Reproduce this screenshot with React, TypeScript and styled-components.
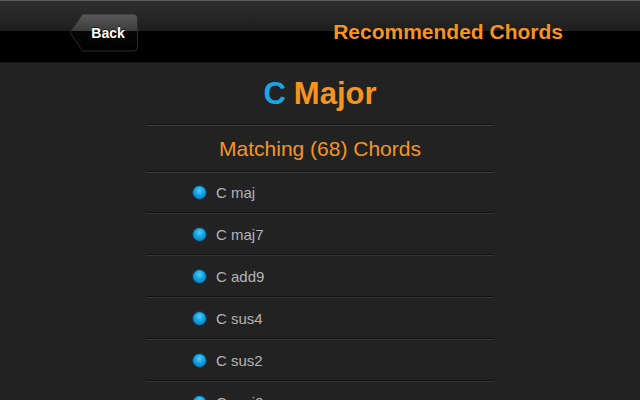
import React from "react";
import styled, { createGlobalStyle } from "styled-components";

const Global = createGlobalStyle`
  html, body { margin: 0; padding: 0; background: #222222; overflow: hidden; }
  body { font-family: "Liberation Sans", Arial, sans-serif; }
`;

const Screen = styled.div`
  width: 100%;
  height: 100vh;
  overflow: hidden;
  background: #222222;
  display: flex;
  flex-direction: column;
`;

const Header = styled.header`
  flex: 0 0 63px;
  height: 63px;
  box-sizing: border-box;
  display: flex;
  align-items: center;
  justify-content: space-between;
  padding: 1px 77px 0 69px;
  background: linear-gradient(
    to bottom,
    #5c5c5c 0px,
    #5c5c5c 1px,
    #2f2f2f 1px,
    #1e1e1e 31px,
    #000000 31px,
    #000000 62px,
    #151515 62px
  );
`;

const BackButton = styled.button`
  position: relative;
  width: 70px;
  height: 39px;
  margin-top: 1px;
  padding: 0 0 0 8px;
  border: none;
  background: transparent;
  color: #ffffff;
  font-family: "Liberation Sans", Arial, sans-serif;
  font-weight: bold;
  font-size: 14px;
  cursor: pointer;
  display: flex;
  align-items: center;
  justify-content: center;
  text-shadow: 0 -1px 0 rgba(0, 0, 0, 0.6);
`;

const ButtonShape = styled.svg`
  position: absolute;
  left: 0;
  top: 0;
  width: 70px;
  height: 39px;
  z-index: 0;
`;

const ButtonLabel = styled.span`
  position: relative;
  z-index: 1;
`;

const HeaderTitle = styled.h1`
  margin: 0;
  color: #f7941d;
  font-size: 21px;
  font-weight: bold;
  font-family: "Liberation Sans", Arial, sans-serif;
`;

const Column = styled.main`
  width: 348px;
  margin: 0 auto;
  display: flex;
  flex-direction: column;
`;

const KeyTitle = styled.h2`
  margin: 0;
  height: 61px;
  display: flex;
  align-items: center;
  justify-content: center;
  gap: 8px;
  font-size: 31px;
  font-weight: bold;
  color: #f7941d;
  border-bottom: 1px solid #151515;
  box-shadow: 0 1px 0 #3c3c3c;
`;

const KeyNote = styled.span`
  color: #1ba6ea;
`;

const SectionTitle = styled.h3`
  margin: 1px 0 0;
  height: 45px;
  display: flex;
  align-items: center;
  justify-content: center;
  font-size: 21px;
  font-weight: normal;
  color: #f7941d;
  border-bottom: 1px solid #151515;
  box-shadow: 0 1px 0 #3a3a3a;
`;

const List = styled.ul`
  list-style: none;
  margin: 0;
  padding: 0;
`;

const Row = styled.li`
  height: 40px;
  display: flex;
  align-items: center;
  gap: 10px;
  padding-left: 47px;
  color: #b4b4b4;
  font-size: 15px;
  border-bottom: 1px solid #121212;
  box-shadow: 0 1px 0 #363636;
  margin-bottom: 1px;
`;

const Bullet = styled.span`
  width: 13px;
  height: 13px;
  border-radius: 50%;
  background: radial-gradient(circle at 50% 35%, #4fd0fa 0%, #11a0e0 45%, #0875b5 100%);
  box-shadow: 0 0 0 1px #0a3f60, 0 1px 1px rgba(0, 0, 0, 0.6);
`;

const chords = ["C maj", "C maj7", "C add9", "C sus4", "C sus2", "C maj9", "C 6", "C 6/9"];

export default function App() {
  return (
    <Screen>
      <Global />
      <Header>
        <BackButton>
          <ButtonShape viewBox="0 0 70 39">
            <defs>
              <linearGradient id="backFill" x1="0" y1="0" x2="0" y2="1">
                <stop offset="0" stopColor="#5a5a5a" />
                <stop offset="0.47" stopColor="#3b3b3b" />
                <stop offset="0.47" stopColor="#070707" />
                <stop offset="1" stopColor="#000000" />
              </linearGradient>
            </defs>
            <path
              d="M13.5 1 H64.5 Q68.5 1 68.5 5 V34 Q68.5 38 64.5 38 H13.5 L1 19.5 Z"
              fill="url(#backFill)"
              stroke="#2c2c2c"
              strokeWidth="1"
            />
          </ButtonShape>
          <ButtonLabel>Back</ButtonLabel>
        </BackButton>
        <HeaderTitle>Recommended Chords</HeaderTitle>
      </Header>
      <Column>
        <KeyTitle>
          <KeyNote>C</KeyNote>
          <span>Major</span>
        </KeyTitle>
        <SectionTitle>Matching (68) Chords</SectionTitle>
        <List>
          {chords.map((c) => (
            <Row key={c}>
              <Bullet />
              <span>{c}</span>
            </Row>
          ))}
        </List>
      </Column>
    </Screen>
  );
}
